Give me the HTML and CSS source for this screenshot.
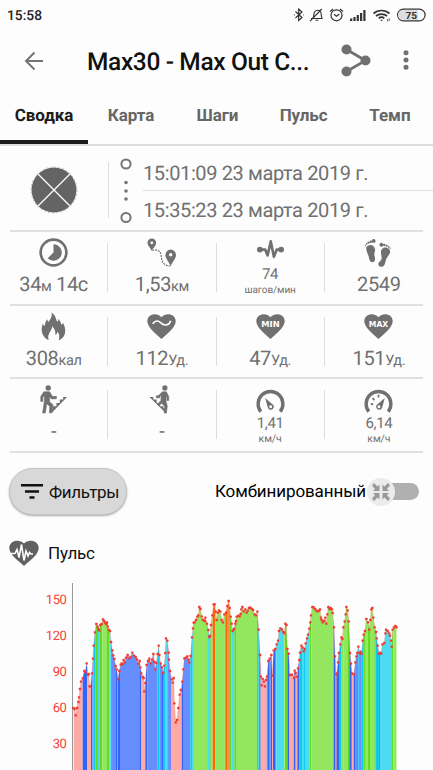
FILE: index.html
```
<!DOCTYPE html>
<html lang="ru">
<head>
<meta charset="utf-8">
<title>Max30 - Max Out C...</title>
<link rel="stylesheet" href="styles.css">
</head>
<body>
<header class="status">
  <span class="clock">15:58</span>
  <svg class="status-icons" width="134" height="18" viewBox="0 0 134 18" fill="none" stroke="#333" stroke-width="1.2">
    <path d="M1.500 5.500 8 11.500 4.700 14.500V3L8 6 1.500 12M9.500 8.800h.5M0 8.800h.7"/>
    <path d="M17 12.500h11.500M18.800 12.200c1.500-2 .8-4 1.500-5.800.7-1.500 2-2.200 3.200-2.200 2.500 0 3.700 2 3.700 4.300 0 1.500.2 2.700 1 3.700M21.500 14.200h2.800M27.800 3 16 15.200" stroke-width="1.100"/>
    <circle cx="42.500" cy="9.300" r="5.500"/><path d="M40 8.300l2.500 2 2.800-2.300M36 5.500l3-2.500M49 5.500 46 3"/>
    <g fill="#333" stroke="none"><path d="M56 12.500h2.300V15H56zM59.400 11h2.200v4h-2.200zM62.700 9h2.200v6h-2.200zM66 7h2.200v8H66zM69.300 4h2.200v11h-2.200z"/></g>
    <path d="M79.500 7.500c4.500-4 11.500-4 16 0M82 10c3-2.600 8-2.600 11 0M84.700 12.300c1.500-1.200 4-1.200 5.600 0" stroke-width="1.700"/><path d="M86 13.700h3l-1.500 1.500z" fill="#333" stroke="none"/><path d="M93.500 13v2.500M95.300 12.500V15" stroke="#777"/>
    <rect x="103.600" y="3.200" width="27.500" height="11.600" rx="5.800"/><path d="M109 4h15v10h-15a5 5 0 0 1 0-10z" fill="#ddd" stroke="none"/>
    <text x="117.300" y="12.800" text-anchor="middle" class="battery">75</text>
  </svg>
</header>
<div class="appbar">
  <svg class="back" width="20" height="20" viewBox="0 0 20 20" fill="none" stroke="#757575" stroke-width="2"><path d="M19 10H2M10.500 1.500 2 10l8.500 8.500"/></svg>
  <h1>Max30 - Max Out C...</h1>
  <svg class="share" width="30" height="33" viewBox="0 0 30 33" fill="#707070"><path d="M5.500 5.500 24.500 16.500 5.500 27.500" fill="none" stroke="#707070" stroke-width="2.700"/><circle cx="5.500" cy="5.500" r="5"/><circle cx="24.500" cy="16.500" r="5"/><circle cx="5.500" cy="27.500" r="5"/></svg>
  <svg class="more" width="6" height="20" viewBox="0 0 6 20" fill="#707070"><circle cx="3" cy="2.700" r="2.500"/><circle cx="3" cy="10" r="2.500"/><circle cx="3" cy="17.300" r="2.500"/></svg>
</div>
<nav class="tabs"><a class="active">Сводка</a><a>Карта</a><a>Шаги</a><a>Пульс</a><a>Темп</a></nav>
<section class="period">
  <div class="sport"><svg width="48" height="48" viewBox="0 0 48 48"><circle cx="24" cy="24" r="22.500" fill="#646464"/><circle cx="24" cy="24" r="23" fill="none" stroke="#aaa" stroke-width=".7" stroke-dasharray="2 2"/><path d="M8 8l32 32M40 8 8 40" stroke="#fff" stroke-width="1.300"/></svg></div>
  <div class="range"><svg width="12" height="66" viewBox="0 0 12 66" fill="#757575"><g fill="none" stroke="#757575" stroke-width="2"><circle cx="6" cy="6" r="4.600"/><circle cx="6" cy="59.500" r="4.600"/></g><circle cx="6" cy="24.500" r="1.800"/><circle cx="6" cy="33" r="1.800"/><circle cx="6" cy="41" r="1.800"/></svg></div>
  <div class="times"><div>15:01:09 23 марта 2019 г.</div><div>15:35:23 23 марта 2019 г.</div></div>
</section>
<section class="stats">
  <div class="row">
    <div class="cell"><svg viewBox="0 0 30 30"><circle cx="15" cy="15" r="13.300" fill="none" stroke="#707070" stroke-width="2.700"/><path d="M15 6.500a8.500 8.500 0 1 1-6 14.500l6-6z"/></svg><p>34<small>м</small> 14с</p></div>
    <div class="cell"><svg viewBox="0 0 30 30"><path fill-rule="evenodd" d="M5 .5a4.500 4.500 0 0 1 4.500 4.500c0 3-3 5-4.500 8.500C3.500 10 .5 8 .5 5A4.500 4.500 0 0 1 5 .5zM5 3.500a1.500 1.500 0 1 0 0 3 1.500 1.500 0 0 0 0-3z"/><path fill-rule="evenodd" d="M24.500 12a5.500 5.500 0 0 1 5.500 5.500c0 4-4 7-5.500 12-1.500-5-5.500-8-5.500-12a5.500 5.500 0 0 1 5.500-5.500zm0 3.500a1.800 1.800 0 1 0 0 3.600 1.800 1.800 0 0 0 0-3.600z"/><path d="M5.500 13c4-1.500 8-.5 9 4 .8 4-.5 11 9.500 12" fill="none" stroke="#707070" stroke-width="1.200" stroke-dasharray="2 1"/></svg><p>1,53<small>км</small></p></div>
    <div class="cell compact"><svg viewBox="0 0 30 30"><path d="M4 12h5.500l2.500 6 3.300-14.500 3.200 16 3-7.500H26" fill="none" stroke="#707070" stroke-width="2.700" stroke-linejoin="round"/><circle cx="4" cy="12" r="3"/><circle cx="26" cy="12" r="3"/></svg><p>74</p><span>шагов/мин</span></div>
    <div class="cell"><svg viewBox="0 0 30 30"><path d="M4 8c3-2 7-.5 7.500 4 0 3-1.500 4-.5 7 .8 3 .5 5.700-2 6-2.600.3-3.500-2-3.800-4.500C4.400 17 2 13 2.300 10.500 2.500 9 3 8.500 4 8zM25.500 11c-3-2.500-8-1-8 4 0 3 1.500 4 .5 7-.8 2.500-3.200 2.500-3.200 5 0 1.700 1.200 2.800 2.700 2.800 3.300 0 4.300-2.800 4.800-5.800.6-4 4.600-6.500 4.700-9.500 0-1.700-.5-3-1.500-3.500z"/><circle cx="10" cy="3" r="2"/><circle cx="7" cy="4" r="1.300"/><circle cx="4.700" cy="4.800" r="1.100"/><circle cx="2.800" cy="6" r=".9"/><circle cx="1.500" cy="7.600" r=".7"/><circle cx="18" cy="7" r="2"/><circle cx="21" cy="7.300" r="1.300"/><circle cx="23.500" cy="8" r="1.100"/><circle cx="25.500" cy="9.300" r=".9"/><circle cx="27" cy="10.500" r=".7"/></svg><p>2549</p></div>
  </div>
  <div class="row">
    <div class="cell"><svg viewBox="0 0 30 30"><path d="M13 .5c5 3.500 4 7 6 9.500 1-.8 1.200-1.700 1-3 2 2 2.500 4 3 6 1-.4 1.500-1 1.800-2 2.800 5 4.800 14-4.300 18.500.8-3 .8-7-1.500-9-.4 2-1 2.800-2 3.300.2-4-1-7-3.500-9 .2 5-5.500 7-3.500 14.500C5 27 .5 21 4 12c.4 1.500 1 2.200 2 2.500.3-3 1-5 2.500-7 .3 1.400.8 2.200 1.700 2.700C11.500 7 14 5 13 .5z"/></svg><p>308<small>кал</small></p></div>
    <div class="cell"><svg viewBox="0 0 30 30"><path d="M15 28C10 23 .3 16 .3 9.500 .3 2 10.500-.2 15 5.500 19.500-.2 29.700 2 29.700 9.500 29.700 16 20 23 15 28z"/><path d="M6 12.500c1-3 5-4.500 8-1.500 4 4 9 3 10.500-2" fill="none" stroke="#fff" stroke-width="1.700"/></svg><p>112<small>Уд.</small></p></div>
    <div class="cell"><svg viewBox="0 0 30 30"><path d="M15 28C10 23 .3 16 .3 9.500 .3 2 10.500-.2 15 5.500 19.500-.2 29.700 2 29.700 9.500 29.700 16 20 23 15 28z"/><text class="heart-label" x="15" y="15" text-anchor="middle" textLength="19" lengthAdjust="spacingAndGlyphs">MIN</text></svg><p>47<small>Уд.</small></p></div>
    <div class="cell"><svg viewBox="0 0 30 30"><path d="M15 28C10 23 .3 16 .3 9.500 .3 2 10.500-.2 15 5.500 19.500-.2 29.700 2 29.700 9.500 29.700 16 20 23 15 28z"/><text class="heart-label" x="15" y="15" text-anchor="middle" textLength="20" lengthAdjust="spacingAndGlyphs">MAX</text></svg><p>151<small>Уд.</small></p></div>
  </div>
  <div class="row">
    <div class="cell"><svg viewBox="0 0 30 30"><circle cx="9.500" cy="3" r="2.800"/><path d="M5 7h6l3 5 4-.3v2.500l-5 .3-2-2v5l3.500 3-1 8h-2.800l.5-6.500L8 19.500 6.500 29H3.700L5.500 17V11l-1.500 2v4H1.800v-5z" stroke="#707070" stroke-width=".6"/><path d="M29 12.500h-4V15h-3.500v3.500H18V22h-3.500v3H12v5z"/></svg><p class="none">-</p></div>
    <div class="cell"><svg viewBox="0 0 30 30"><circle cx="18.500" cy="3" r="2.700"/><path d="M16 7h4l2.500 5v4h-1.800v-3.500L19.800 11v6l1.200 5-1 7h-2.300l.5-7-3-3-3 2.500-1.300-1.500 3.500-4 .3-6-2 3.500-3-.3v-2l2-.2z" stroke="#707070" stroke-width=".6"/><path d="M2.500 12.500h4V15H10v3.500h3.500V22H17v2h3v5.500z"/></svg><p class="none">-</p></div>
    <div class="cell compact speed"><svg viewBox="0 0 30 30"><path d="M5 25.500A12.800 12.800 0 1 1 25 25.500" fill="none" stroke="#707070" stroke-width="3.500"/><path fill-rule="evenodd" d="M9.500 11.500l7.200 6a3.200 3.200 0 1 1-4.500 3.700zM15.200 19a1.500 1.500 0 1 0 .01 0z"/></svg><p>1,41</p><span>км/ч</span></div>
    <div class="cell compact speed"><svg viewBox="0 0 30 30"><path d="M5 25.500A12.800 12.800 0 1 1 25 25.500" fill="none" stroke="#707070" stroke-width="3.500"/><path fill-rule="evenodd" d="M21.500 11.500l-7.200 6a3.200 3.200 0 1 0 4.500 3.700zM15.500 19a1.500 1.500 0 1 1-.01 0z"/><path d="M7 17.500l2.500.5M8.800 11.500l2 2M15 8v2.800" stroke="#707070" stroke-width="1.800"/></svg><p>6,14</p><span>км/ч</span></div>
  </div>
</section>
<section class="controls">
  <button><svg width="22" height="15" viewBox="0 0 22 15"><path d="M0 0h22v2.600H0zM4 6.200h14v2.600H4zM8.500 12.200h5v2.600h-5z" fill="#111"/></svg>Фильтры</button>
  <div class="combined">Комбинированный<span class="switch"><i class="knob"><svg width="18" height="18" viewBox="0 0 18 18" fill="#999"><path id="arrow" d="M2 0l3.500 3.500L7.500 1.500V8H1L3 6 0 2.500z"/><use href="#arrow" transform="matrix(-1 0 0 1 18 0)"/><use href="#arrow" transform="matrix(1 0 0 -1 0 18)"/><use href="#arrow" transform="matrix(-1 0 0 -1 18 18)"/></svg></i></span></div>
</section>
<h2><svg width="30" height="27" viewBox="0 0 30 27"><path d="M15 26C10 21 .3 15 .3 8 .3 .3 10.500-1.500 15 3.500 19.500-1.500 29.700 .3 29.700 8 29.700 15 20 21 15 26z" fill="#616161"/><path d="M1 13.500h5l2-4 2 8 2.500-13 2.500 16L17 11l2 5 1.500-3.500 1.500 1.500h2" fill="none" stroke="#fff" stroke-width="1.600"/></svg>Пульс</h2>
<section class="chart">
  <div class="scale"><span>150</span><span>120</span><span>90</span><span>60</span><span>30</span></div>
  <svg id="plot" width="361" height="187" viewBox="126 24 1083 561"></svg>
</section>
<script src="chart.js"></script>
</body>
</html>
```
FILE: styles.css
```
* { box-sizing: border-box; }
body { margin: 0; width: 433px; height: 770px; overflow: hidden; background: #fdfdfd; color: #111; font-family: Roboto, "Noto Sans", sans-serif; text-rendering: geometricPrecision; }
svg { display: block; flex: none; }
.status { height: 30px; padding: 1px 5px 0 7px; display: flex; align-items: center; justify-content: space-between; }
.clock { font-size: 13.8px; font-weight: 500; color: #222; }
.status-icons { margin-top: -1px; }
.battery { font-size: 10px; font-weight: 700; fill: #333; stroke: none; }
.appbar { height: 62px; padding-left: 24px; display: flex; align-items: center; }
h1 { margin: 2px 0 0 43px; width: 254px; font-size: 24.5px; line-height: 30px; font-weight: 500; letter-spacing: -.37px; white-space: nowrap; }
.share { margin-top: -2px; }
.more { margin-left: 32px; margin-top: -2px; }
.tabs { height: 54px; display: grid; grid-template-columns: 88px repeat(4, 1fr); border-bottom: 2px solid #ddd; }
.tabs a { height: 52px; line-height: 48px; text-align: center; font-size: 17px; font-weight: 700; letter-spacing: -.05px; color: #666; }
.tabs .active { color: #1c1c1c; border-bottom: 4px solid #1c1c1c; }
.period { height: 84px; display: flex; }
.sport { width: 109px; height: 56px; margin-top: 16px; display: flex; align-items: center; justify-content: center; border-right: 1px solid #ddd; }
.range { width: 34px; padding: 12px 0 0 11px; }
.times { flex: 1; font-size: 20px; letter-spacing: -.38px; color: #707070; white-space: nowrap; }
.times div { height: 44px; padding-top: 12px; line-height: 31px; }
.times div + div { height: 39px; padding-top: 4px; border-top: 1px solid #ddd; }
.row { height: 73.500px; display: grid; grid-template-columns: repeat(4, 1fr); position: relative; }
.row::before, .row:last-child::after { content: ""; position: absolute; left: 10px; right: 10px; top: 0; border-top: 2px solid #e0e0e0; }
.row:last-child::after { top: auto; bottom: -2px; }
.cell { display: flex; flex-direction: column; align-items: center; height: 49px; margin-top: 13px; border-right: 1px solid #ddd; color: #707070; }
.cell:last-child { border-right: 0; }
.cell svg { width: 29px; height: 29px; margin-top: -5px; fill: #707070; }
.cell p { margin: 4px 0 0; font-size: 20px; line-height: 26px; letter-spacing: -.35px; white-space: nowrap; }
.cell small { font-size: 14.5px; }
.cell .none { margin-top: 4px; }
.cell.compact p { margin-top: -3px; font-size: 15px; line-height: 20px; }
.cell.compact span { margin-top: 1px; font-size: 10px; line-height: 11px; letter-spacing: -.1px; }
.cell.speed svg { margin-top: -3px; }
.cell.speed p { margin-top: -3px; }
.cell.speed span { margin-top: 0; font-size: 10.5px; }
.heart-label { font-family: "DejaVu Sans", sans-serif; font-size: 8.5px; font-weight: 700; fill: #fff; }
.controls { height: 79px; margin-top: 1px; padding: 0 14px 0 9px; display: flex; align-items: center; justify-content: space-between; font-size: 17px; }
button { height: 47px; width: 118px; padding: 1px 0 0 11px; border: 1px solid #c4c4c4; border-radius: 24px; background: #d8d8d8; box-shadow: 0 1px 2px #aaa; display: flex; align-items: center; gap: 6px; font: 17px Roboto, sans-serif; letter-spacing: -.3px; color: #111; }
.combined { display: flex; align-items: center; color: #000; padding-top: 1px; letter-spacing: -.1px; }
.switch { width: 49px; height: 17px; margin-left: 4px; border-radius: 9px; background: #b0b0b0; display: flex; align-items: center; }
.knob { width: 28px; height: 28px; margin-left: -3px; border-radius: 50%; background: #ebebeb; display: flex; align-items: center; justify-content: center; flex: none; }
h2 { height: 46px; margin: 0 0 6px; padding-left: 9px; display: flex; align-items: center; gap: 9px; font-size: 17px; font-weight: 400; letter-spacing: -.2px; }
.chart { display: flex; }
.scale { width: 72px; padding: 0 5.5px 0 0; text-align: right; font-size: 13px; letter-spacing: -.4px; color: #f44336; }
.scale span { display: block; height: 36px; line-height: 36px; }
```
FILE: chart.js
```
const samples = `130,399 134,402 137,421 141,399 145,381 147,367 150,342 153,320 158,310 163,288 166,292 170,265 174,299 176,297 179,334 182,334 186,295 189,251 191,212 195,172 199,147 203,155 205,162 208,167 211,150 215,147 219,133 222,138 226,144 229,147 231,142 233,154 236,164 240,168 243,201 247,226 250,241 253,252 257,273 260,283 264,313 268,288 272,269 275,265 278,268 281,255 285,262 288,248 293,240 298,250 302,246 307,233 312,242 317,246 321,253 325,266 329,258 331,277 334,295 338,305 341,309 343,349 346,324 350,270 354,258 358,251 363,265 366,254 370,237 373,261 376,283 379,264 383,237 386,212 388,240 392,266 396,277 399,294 403,272 406,234 408,190 412,197 416,233 417,254 420,288 425,313 428,323 431,309 433,385 437,442 441,435 445,399 449,359 453,345 457,320 460,283 463,250 467,248 472,244 476,254 478,262 482,243 486,187 489,160 491,143 494,142 498,135 502,125 505,121 508,96 511,102 515,124 518,134 522,137 525,138 526,128 531,146 535,165 538,186 540,183 543,150 547,121 551,88 554,88 557,110 560,135 563,113 567,106 571,110 575,135 579,142 583,118 588,113 592,93 596,78 599,99 602,125 605,146 608,168 612,162 616,146 618,138 620,125 625,122 629,124 632,117 634,103 637,96 641,109 646,103 650,113 653,107 657,99 661,98 665,101 669,105 674,118 678,121 682,110 686,164 690,240 693,305 695,331 698,312 702,320 705,334 708,315 711,305 715,258 719,251 724,240 727,302 731,226 736,222 740,208 744,197 747,168 751,160 756,163 760,171 763,175 766,146 769,150 772,222 776,236 780,300 786,299 792,308 794,287 797,294 801,305 804,280 808,255 810,233 814,212 818,218 821,229 824,222 827,205 831,190 834,179 838,161 841,142 843,121 847,96 851,97 855,102 859,107 863,109 867,107 870,103 873,128 875,135 878,142 882,138 886,128 889,146 892,118 895,96 899,102 902,99 906,103 908,114 912,157 915,244 919,298 921,295 924,262 927,234 931,208 934,187 937,192 940,157 944,139 947,118 949,96 953,106 956,139 960,234 963,266 966,295 972,298 976,262 979,244 982,234 985,215 989,234 992,230 995,236 998,197 1001,179 1005,168 1009,132 1014,142 1018,164 1021,135 1024,103 1027,99 1030,128 1034,157 1038,171 1040,190 1043,212 1047,236 1051,233 1054,236 1057,208 1063,204 1066,175 1068,164 1073,168 1078,175 1080,182 1083,197 1085,215 1088,164 1092,157 1096,153 1100,157`;
// Each zone starts at its x and runs to the next one.
const zones = 'p130 B158 p172 B183 b187 C190 G197 c204 G210 g217 G231 c238 C242 b246 B258 b262 B264 b270 B328 p333 B346 b352 C383 b388 B394 C401 c405 B413 b416 p423 B455 b459 C481 c486 G490 g494 G529 c533 G541 g545 O548 g556 G584 O588 o591 O595 G599 c605 G613 g618 G681 C685 B688 p692 b710 B714 b719 B722 p726 B729 C735 c739 G760 g763 G765 C771 B774 p777 B791 p797 B802 C808 c816 C820 c825 G839 g844 G908 B912 m916 B921 C927 g935 G937 g940 G952 B958 b963 p966 B971 b977 B982 C985 b990 C995 G1001 g1007 G1013 g1020 G1033 C1037 b1041 C1044 b1047 C1051 c1055 G1086 g1090 p1101'.split(' ');
const colours = { p: '#ffaaa4', B: '#3064fa', b: '#668eff', C: '#10c9ec', c: '#4bdcf1', G: '#60dc22', g: '#92e75f', O: '#ff6608', o: '#ff9140', m: '#a389ae' };
const bands = zones.slice(0, -1).map((z, i) => {
  const x = +z.slice(1), end = +zones[i + 1].slice(1);
  return `<rect x="${x}" y="0" width="${end - x}" height="585" fill="${colours[z[0]]}"/>`;
}).join('');
const dots = samples.split(' ').map(p => {
  const [x, y] = p.split(',').map(Number);
  return `<rect x="${x - 3.5}" y="${y - 3.5}" width="7" height="7" rx="1.5" fill="#f2392e"/>`;
}).join('');
document.getElementById('plot').innerHTML = `
  <clipPath id="area"><polygon points="130,585 ${samples} 1100,585"/></clipPath>
  <g clip-path="url(#area)">${bands}</g>
  <path d="M127.500 24V585" stroke="#999" stroke-width="3"/>
  <polyline points="${samples}" fill="none" stroke="#f0655c" stroke-opacity=".45" stroke-width="2"/>${dots}`;
```
